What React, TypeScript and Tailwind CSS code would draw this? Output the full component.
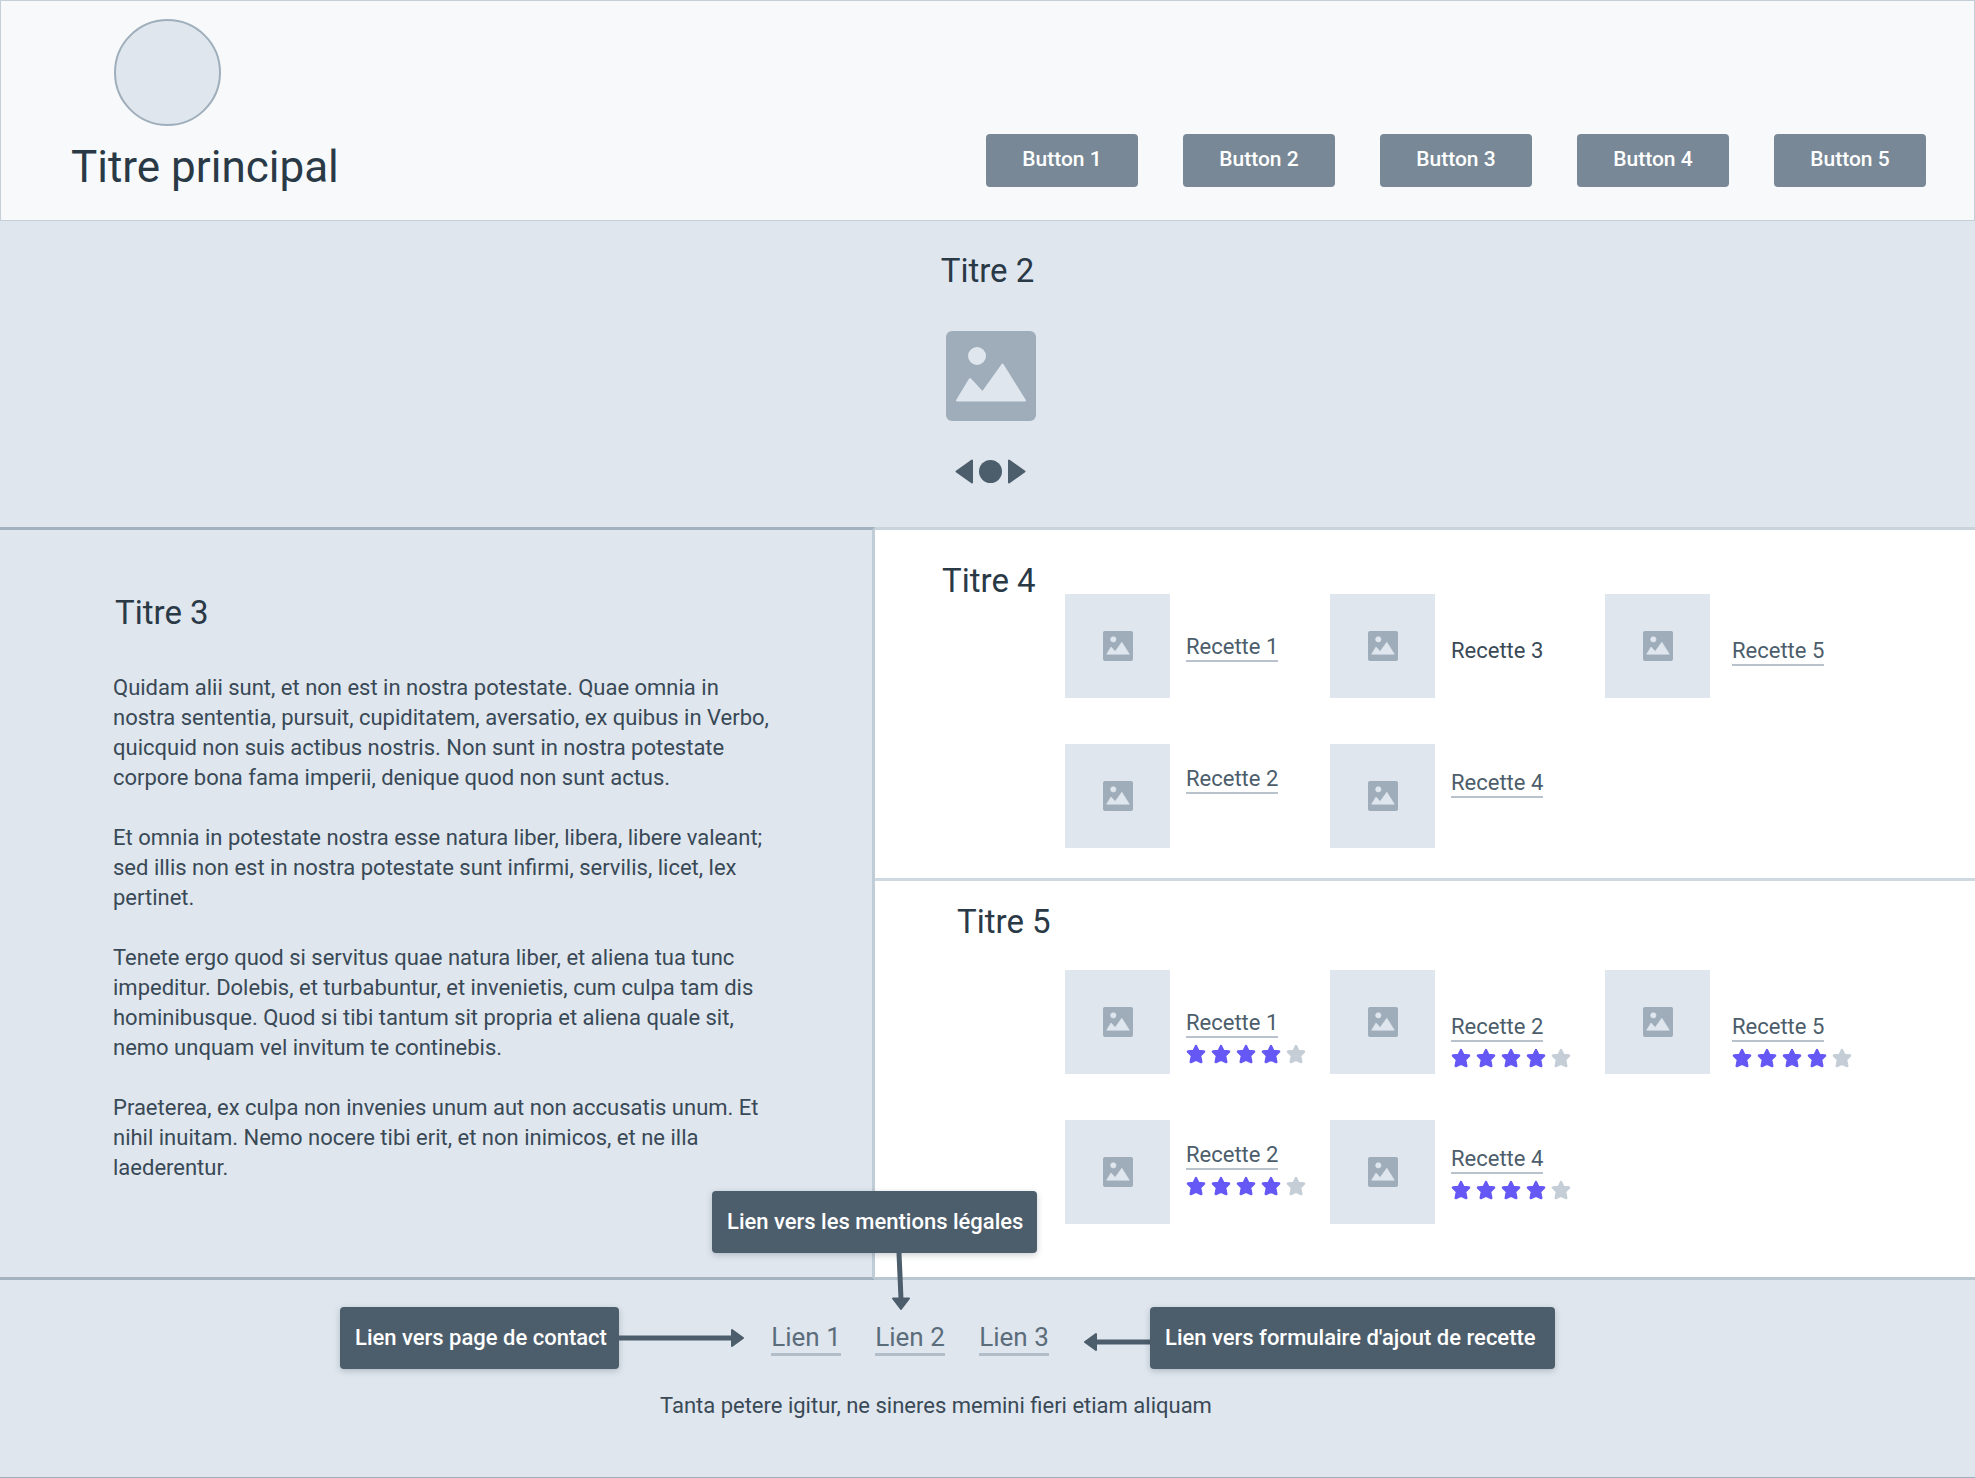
import React from "react";

type Recipe = {
  label: string;
  plain?: boolean;
  drop: string;
};

const columnsTop: Recipe[][] = [
  [
    { label: "Recette 1", drop: "pt-10" },
    { label: "Recette 2", drop: "pt-5.5" },
  ],
  [
    { label: "Recette 3", plain: true, drop: "pt-11" },
    { label: "Recette 4", drop: "pt-6.5" },
  ],
  [{ label: "Recette 5", drop: "pt-11" }],
];

const columnsRated: Recipe[][] = [
  [
    { label: "Recette 1", drop: "pt-10" },
    { label: "Recette 2", drop: "pt-5.5" },
  ],
  [
    { label: "Recette 2", drop: "pt-11" },
    { label: "Recette 4", drop: "pt-6.5" },
  ],
  [{ label: "Recette 5", drop: "pt-11" }],
];

const paragraphs = [
  "Quidam alii sunt, et non est in nostra potestate. Quae omnia in nostra sententia, pursuit, cupiditatem, aversatio, ex quibus in Verbo, quicquid non suis actibus nostris. Non sunt in nostra potestate corpore bona fama imperii, denique quod non sunt actus.",
  "Et omnia in potestate nostra esse natura liber, libera, libere valeant; sed illis non est in nostra potestate sunt infirmi, servilis, licet, lex pertinet.",
  "Tenete ergo quod si servitus quae natura liber, et aliena tua tunc impeditur. Dolebis, et turbabuntur, et invenietis, cum culpa tam dis hominibusque. Quod si tibi tantum sit propria et aliena quale sit, nemo unquam vel invitum te continebis.",
  "Praeterea, ex culpa non invenies unum aut non accusatis unum. Et nihil inuitam. Nemo nocere tibi erit, et non inimicos, et ne illa laederentur.",
];

function Picture({ className }: { className: string }) {
  return (
    <svg viewBox="0 0 90 90" className={className} aria-hidden="true">
      <rect width="90" height="90" rx="6" fill="#9eadb9" />
      <g fill="#dfe6ee" stroke="#dfe6ee" strokeWidth="2" strokeLinejoin="round">
        <circle cx="31" cy="25" r="8" />
        <path d="M11 69.500 24 48 36.500 61.500 56.500 33.500 79 69.500Z" />
      </g>
    </svg>
  );
}

function Star({ on }: { on: boolean }) {
  return (
    <svg viewBox="0 0 20 20" className="size-5" aria-hidden="true">
      <path
        d="M10 2.200 12.300 7 18 7.600 14 11.600 15.200 18 10 15.600 4.800 18 6 11.600 2 7.600 7.700 7Z"
        fill={on ? "#6558f5" : "#c5cdd6"}
        stroke={on ? "#6558f5" : "#c5cdd6"}
        strokeWidth="2.600"
        strokeLinejoin="round"
      />
    </svg>
  );
}

function Title({ children }: { children: React.ReactNode }) {
  return <h2 className="text-[33px] leading-10 text-[#2a3946] whitespace-nowrap">{children}</h2>;
}

function RecipeItem({ recipe, gap, rated }: { recipe: Recipe; gap: string; rated?: boolean }) {
  return (
    <li className={`flex ${gap}`}>
      <div className="flex h-26 w-[105px] shrink-0 items-center justify-center bg-[#dfe6ee]">
        <Picture className="size-[30px]" />
      </div>
      <div className={`flex flex-col items-start ${recipe.drop}`}>
        {recipe.plain ? (
          <span className="text-[22px] leading-[26px] whitespace-nowrap text-[#394956]">{recipe.label}</span>
        ) : (
          <a
            href="#"
            className="border-b-2 border-[#b9c1ca] text-[22px] leading-[26px] whitespace-nowrap text-[#4c5d6b]"
          >
            {recipe.label}
          </a>
        )}
        {rated && (
          <div className="mt-1.5 flex gap-[5px]" role="img" aria-label="4 sur 5">
            {[0, 1, 2, 3, 4].map((i) => (
              <Star key={i} on={i < 4} />
            ))}
          </div>
        )}
      </div>
    </li>
  );
}

function RecipeGrid({ columns, rated }: { columns: Recipe[][]; rated?: boolean }) {
  const gaps = ["gap-4", "gap-4", "gap-[22px]"];
  return (
    <div className="grid grid-cols-[265px_275px_1fr]">
      {columns.map((items, c) => (
        <ul key={c} className="flex flex-col gap-[46px]">
          {items.map((r) => (
            <RecipeItem key={r.label} recipe={r} gap={gaps[c]} rated={rated} />
          ))}
        </ul>
      ))}
    </div>
  );
}

function Callout({ width, children }: { width: string; children: React.ReactNode }) {
  return (
    <div
      className={`flex h-[62px] shrink-0 items-center rounded-[4px] bg-[#4c5d6b] px-[15px] pb-0.5 text-[22px] font-medium whitespace-nowrap text-white shadow-[0_2px_6px_rgba(40,56,70,0.25)] ${width}`}
    >
      {children}
    </div>
  );
}

export default function App() {
  return (
    <div className="flex min-h-screen flex-col bg-[#dfe6ee] font-['Roboto',sans-serif]">
      <header className="flex items-end justify-between border border-[#c3cfd9] bg-[#f8f9fb] pt-[18px] pr-12 pb-[25px] pl-[70px]">
        <div>
          <div className="ml-[43px] size-[107px] rounded-full border-2 border-[#9eaebb] bg-[#dfe6ee]" />
          <h1 className="mt-[13px] text-[44px] leading-[56px] whitespace-nowrap text-[#2a3946]">Titre principal</h1>
        </div>
        <nav className="flex gap-[45px] pb-2">
          {[1, 2, 3, 4, 5].map((n) => (
            <button
              key={n}
              type="button"
              className="h-[53px] w-[152px] rounded-[4px] bg-[#788896] pb-0.5 text-[21px] font-medium text-white"
            >
              Button {n}
            </button>
          ))}
        </nav>
      </header>

      <section className="flex flex-col items-center pt-[30px] pb-[43px]">
        <Title>Titre 2</Title>
        <div className="mt-10 flex flex-col items-center pl-1.5">
          <Picture className="size-[90px]" />
          <div className="mt-[38px] flex items-center gap-1.5">
            <button type="button" aria-label="Précédent">
              <svg viewBox="0 0 18 25" className="block h-[25px] w-[18px]">
                <path d="M17 1.500V23.500L1.500 12.500Z" fill="#4c5d6b" stroke="#4c5d6b" strokeWidth="2" strokeLinejoin="round" />
              </svg>
            </button>
            <button type="button" aria-label="Image 1" className="size-[23px] rounded-full bg-[#4c5d6b]" />
            <button type="button" aria-label="Suivant">
              <svg viewBox="0 0 18 25" className="block h-[25px] w-[18px]">
                <path d="M1 1.500V23.500L16.500 12.500Z" fill="#4c5d6b" stroke="#4c5d6b" strokeWidth="2" strokeLinejoin="round" />
              </svg>
            </button>
          </div>
        </div>
      </section>

      <main className="grid grid-cols-[35fr_44fr]">
        <article className="border-y-3 border-r-3 border-y-[#a3b2be] border-r-[#c0ccd6] pt-[63px] pr-24 pl-[113px]">
          <div className="pl-0.5">
            <Title>Titre 3</Title>
          </div>
          <div className="mt-10 flex flex-col gap-[30px] text-[22px] leading-[30px] text-[#394956]">
            {paragraphs.map((p) => (
              <p key={p}>{p}</p>
            ))}
          </div>
        </article>
        <div className="bg-white">
          <section className="flex border-t-3 border-[#c8d3dc] pt-[31px] pb-[30px] pl-[67px]">
            <div className="w-[123px]">
              <Title>Titre 4</Title>
            </div>
            <div className="flex-1 pt-[33px]">
              <RecipeGrid columns={columnsTop} />
            </div>
          </section>
          <section className="border-y-3 border-t-[#ced8e1] border-b-[#bac7d1] pt-[21px] pb-[53px]">
            <div className="pl-[82px]">
              <Title>Titre 5</Title>
            </div>
            <div className="pt-7 pl-[190px]">
              <RecipeGrid columns={columnsRated} rated />
            </div>
          </section>
        </div>
      </main>

      <footer className="relative flex-1 border-b border-[#9eaebb] pt-[27px]">
        <div className="absolute -top-[89px] left-[712px]">
          <Callout width="w-[325px]">Lien vers les mentions légales</Callout>
          <svg viewBox="0 0 20 58" className="ml-[179px] block h-[58px] w-5" aria-hidden="true">
            <path d="M8 0 10 46" stroke="#4c5d6b" strokeWidth="5" />
            <path d="M2 45.500H18L10 56Z" fill="#4c5d6b" stroke="#4c5d6b" strokeWidth="2" strokeLinejoin="round" />
          </svg>
        </div>
        <div className="flex items-center pl-[340px]">
          <Callout width="w-[279px]">Lien vers page de contact</Callout>
          <svg viewBox="0 0 125 20" className="block h-5 w-[125px] shrink-0" aria-hidden="true">
            <path d="M0 10H114" stroke="#4c5d6b" strokeWidth="5" />
            <path d="M113 2V18L124 10Z" fill="#4c5d6b" stroke="#4c5d6b" strokeWidth="2" strokeLinejoin="round" />
          </svg>
          <nav className="mx-[27px] flex gap-[34px]">
            {[1, 2, 3].map((n) => (
              <a
                key={n}
                href="#"
                className="w-[70px] border-b-3 border-[#b1bdc8] text-center text-[26px] leading-8 whitespace-nowrap text-[#5b6c7a]"
              >
                Lien {n}
              </a>
            ))}
          </nav>
          <svg viewBox="0 0 74 20" className="mt-2 block h-5 w-[74px] shrink-0" aria-hidden="true">
            <path d="M18 10H74" stroke="#4c5d6b" strokeWidth="5" />
            <path d="M20 2V18L9 10Z" fill="#4c5d6b" stroke="#4c5d6b" strokeWidth="2" strokeLinejoin="round" />
          </svg>
          <Callout width="w-[405px]">Lien vers formulaire d'ajout de recette</Callout>
        </div>
        <p className="mt-[22px] pl-[660px] text-[22px] leading-[30px] text-[#394956]">
          Tanta petere igitur, ne sineres memini fieri etiam aliquam
        </p>
      </footer>
    </div>
  );
}
